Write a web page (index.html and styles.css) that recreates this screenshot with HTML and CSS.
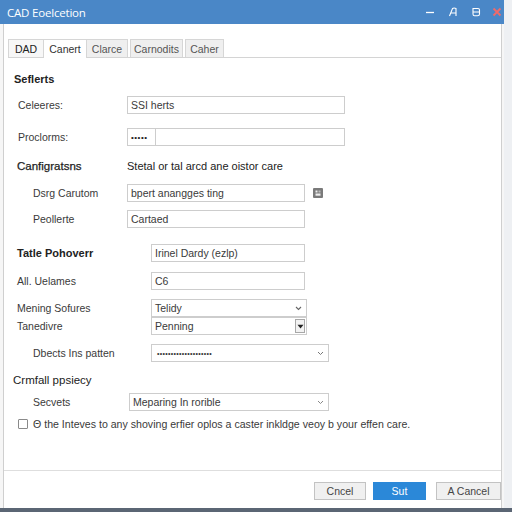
FILE: index.html
```html
<!DOCTYPE html>
<html>
<head>
<meta charset="utf-8">
<link rel="stylesheet" href="styles.css">
</head>
<body>
<div class="window">
  <div class="titlebar">
    <span class="title">CAD Eoelcetion</span>
    <div class="controls">
      <svg class="ctl" viewBox="0 0 10 10"><line x1="1" y1="5.5" x2="9" y2="5.5" stroke="#fff" stroke-width="1.3"/></svg>
      <svg class="ctl" viewBox="0 0 10 10"><path d="M1.5 9 L4.5 1.5 Q6 0.5 8 1.5 L8 9 M3 6 L8 6" fill="none" stroke="#fff" stroke-width="1.1"/></svg>
      <svg class="ctl" viewBox="0 0 10 10"><path d="M2 1.5 H7 Q8.5 1.5 8.5 3 V7 Q8.5 8.8 6.5 8.8 H3.5 Q2 8.8 2 7 Z M2 5 H8.5" fill="none" stroke="#fff" stroke-width="1.1"/></svg>
      <svg class="ctl close" viewBox="0 0 10 10"><path d="M1.5 1.5 L8.5 8.5 M8.5 1.5 L1.5 8.5" stroke="#f06a6a" stroke-width="1.8"/></svg>
    </div>
  </div>
  <div class="content">
    <div class="tabs">
      <div class="tab first">DAD</div>
      <div class="tab active">Canert</div>
      <div class="tab">Clarce</div>
      <div class="tab">Carnodits</div>
      <div class="tab">Caher</div>
    </div>
    <div class="form">
      <div class="heading h-sef">Seflerts</div>

      <div class="row r1">
        <span class="label w109">Celeeres:</span>
        <div class="field w218">SSI herts</div>
      </div>
      <div class="row r2">
        <span class="label w109">Proclorms:</span>
        <div class="field w218 pw"><span class="dots">•••••</span></div>
      </div>
      <div class="row r3">
        <span class="label w110 medium">Canfigratsns</span>
        <span class="desc">Stetal or tal arcd ane oistor care</span>
      </div>
      <div class="row r4 ind">
        <span class="label w94">Dsrg Carutom</span>
        <div class="field w178">bpert anangges ting</div>
        <span class="chip"><svg viewBox="0 0 10 10"><rect x="2.5" y="2.5" width="2" height="2" fill="#eee"/><rect x="5.5" y="2.5" width="2" height="2" fill="#bbb"/><rect x="2.5" y="5.5" width="5" height="2.2" fill="#eee"/></svg></span>
      </div>
      <div class="row r5 ind">
        <span class="label w94">Peollerte</span>
        <div class="field w178">Cartaed</div>
      </div>
      <div class="row r6 out">
        <span class="label w134 strong">Tatle Pohoverr</span>
        <div class="field w154">Irinel Dardy (ezlp)</div>
      </div>
      <div class="row r7 out">
        <span class="label w134">All. Uelames</span>
        <div class="field w154">C6</div>
      </div>
      <div class="row r8 out">
        <span class="label w134">Mening Sofures</span>
        <div class="field w156 select">Telidy<svg class="caret" viewBox="0 0 7 5"><path d="M1 1 L3.5 3.5 L6 1" fill="none" stroke="#666" stroke-width="1.1"/></svg></div>
      </div>
      <div class="row r9 out">
        <span class="label w134">Tanedivre</span>
        <div class="field w156 select boxed">Penning<span class="dropbtn"><svg viewBox="0 0 7 5"><path d="M0.5 0.8 L6.5 0.8 L3.5 4.4 Z" fill="#222"/></svg></span></div>
      </div>
      <div class="row r10 ind">
        <span class="label w118">Dbects Ins patten</span>
        <div class="field w178 select"><span class="sdots">••••••••••••••••••••</span><svg class="caret" viewBox="0 0 7 5"><path d="M1 1 L3.5 3.5 L6 1" fill="none" stroke="#777" stroke-width="1"/></svg></div>
      </div>
      <div class="heading h-crm">Crmfall ppsiecy</div>
      <div class="row r11 ind">
        <span class="label w96">Secvets</span>
        <div class="field w200 select">Meparing In rorible<svg class="caret" viewBox="0 0 7 5"><path d="M1 1 L3.5 3.5 L6 1" fill="none" stroke="#888" stroke-width="1"/></svg></div>
      </div>
      <div class="row chkrow">
        <span class="check"></span>
        <span class="chktext">Θ the Inteves to any shoving erfier oplos a caster inkldge veoy b your effen care.</span>
      </div>
    </div>
    <div class="footer">
      <button class="btn b1">Cncel</button>
      <button class="btn primary b2">Sut</button>
      <button class="btn b3">A Cancel</button>
    </div>
  </div>
</div>
<div class="taskbar"></div>
</body>
</html>
```

FILE: styles.css
```css
* { box-sizing: border-box; }
html, body { margin: 0; padding: 0; }
body {
  width: 512px;
  height: 512px;
  overflow: hidden;
  background: #eef0f3;
  font-family: "Liberation Sans", Arial, sans-serif;
  font-size: 10.5px;
  color: #3a3a3a;
}
.window {
  width: 504px;
  height: 508px;
  background: #f6f6f6;
  display: flex;
  flex-direction: column;
}
.titlebar {
  height: 24px;
  background: #4a87c7;
  display: flex;
  align-items: center;
  justify-content: space-between;
  padding-left: 7px;
  flex-shrink: 0;
}
.title {
  color: #fff;
  font-family: "Open Sans", sans-serif;
  font-size: 11.5px;
  letter-spacing: -0.2px;
}
.controls {
  display: flex;
  align-items: center;
  gap: 13px;
  padding-right: 2px;
}
.ctl { width: 10px; height: 10px; display: block; }
.ctl.close { margin-left: -2px; }

.content {
  flex: 1;
  margin: 0 2px 0 3px;
  border-left: 1px solid #cfcfcf;
  border-right: 1px solid #cfcfcf;
  background: #fff;
  display: flex;
  flex-direction: column;
}
.tabs {
  margin: 15px 0 0 4px;
  height: 19px;
  display: flex;
  border-bottom: 1px solid #d4d4d4;
}
.tab {
  height: 18px;
  padding: 0;
  display: flex;
  align-items: center;
  justify-content: center;
  background: #efefef;
  border: 1px solid #d6d6d6;
  border-bottom: none;
  color: #555;
  font-size: 10.5px;
}
.tab.first { width: 36px; background: #f7f7f7; color: #222; }
.tab.active { width: 43px; background: #fff; height: 19px; margin-bottom: -1px; color: #333; border-left: none; }
.tab:nth-child(3) { width: 41px; border-left: none; }
.tab:nth-child(4) { width: 53px; margin-left: 2px; }
.tab:nth-child(5) { width: 39px; margin-left: 2px; }

.form { flex: 1; display: flex; flex-direction: column; }
.heading {
  height: 16px;
  display: flex;
  align-items: center;
  font-weight: bold;
  font-size: 11px;
  color: #222;
}
.h-sef { margin-top: 13px; padding-left: 10px; }
.h-crm { margin-top: 10px; padding-left: 9px; font-weight: normal; font-size: 11.5px; color: #222; }

.row { display: flex; align-items: center; height: 18px; }
.label { flex-shrink: 0; color: #3a3a3a; }
.strong { font-weight: bold; color: #222; font-size: 11px; }
.medium { color: #1e1e1e; font-size: 11.5px; -webkit-text-stroke: 0.25px #1e1e1e; }
.w109 { width: 109px; }
.w110 { width: 110px; }
.w94 { width: 94px; }
.w134 { width: 134px; }
.w118 { width: 118px; }
.w96 { width: 96px; }

.r1 { margin-top: 9px; padding-left: 14px; }
.r2 { margin-top: 14px; padding-left: 14px; }
.r3 { margin-top: 12px; padding-left: 13px; height: 16px; }
.r4 { margin-top: 10px; }
.r5 { margin-top: 8px; }
.r6 { margin-top: 16px; }
.r7 { margin-top: 10px; }
.r8 { margin-top: 9px; }
.r9 { margin-top: 0; }
.r10 { margin-top: 9px; }
.r11 { margin-top: 5px; }
.ind { padding-left: 29px; }
.out { padding-left: 13px; }
.desc { color: #222; font-size: 11px; }

.field {
  height: 18px;
  border: 1px solid #cdcdcd;
  background: #fff;
  display: flex;
  align-items: center;
  padding: 0 3px;
  color: #3a3a3a;
}
.w218 { width: 218px; }
.w178 { width: 178px; }
.w154 { width: 154px; }
.w156 { width: 156px; }
.w200 { width: 200px; }
.pw { padding: 0; }
.dots {
  width: 28px;
  height: 100%;
  border-right: 1px solid #cdcdcd;
  display: flex;
  align-items: center;
  padding-left: 3px;
  font-size: 8px;
  letter-spacing: 0.5px;
  color: #222;
}
.sdots { font-size: 7px; letter-spacing: 0.3px; color: #333; padding-left: 2px; }
.select { justify-content: space-between; }
.caret { width: 7px; height: 5px; margin-right: 1px; }
.boxed { padding-right: 1px; }
.dropbtn {
  width: 10px;
  height: 14px;
  border: 1px solid #a8a8a8;
  background: #f2f2f2;
  display: flex;
  align-items: center;
  justify-content: center;
}
.dropbtn svg { width: 7px; height: 5px; }
.chip {
  width: 10px;
  height: 10px;
  margin-left: 8px;
  background: #7a7a7a;
  border-radius: 1px;
  display: block;
}
.chip svg { width: 10px; height: 10px; display: block; }

.chkrow { margin-top: 5px; height: 16px; padding-left: 14px; }
.check {
  width: 10px;
  height: 10px;
  border: 1px solid #8a8a8a;
  border-radius: 1px;
  background: #fff;
  margin-right: 5px;
}
.chktext { color: #3a3a3a; font-size: 10.6px; }

.footer {
  height: 38px;
  border-top: 1px solid #dedede;
  display: flex;
  justify-content: flex-end;
  align-items: flex-start;
  padding: 11px 0 0 0;
}
.btn {
  height: 18px;
  font-family: "Liberation Sans", Arial, sans-serif;
  font-size: 10.5px;
  border: 1px solid #c3c3c3;
  background: #f0f0f0;
  color: #444;
  padding: 0;
}
.b1 { width: 52px; margin-right: 7px; }
.b2 { width: 53px; margin-right: 10px; background: #2b88d8; border-color: #2b88d8; color: #fff; }
.b3 { width: 65px; }
.taskbar { height: 4px; background: #5b6674; }
```
